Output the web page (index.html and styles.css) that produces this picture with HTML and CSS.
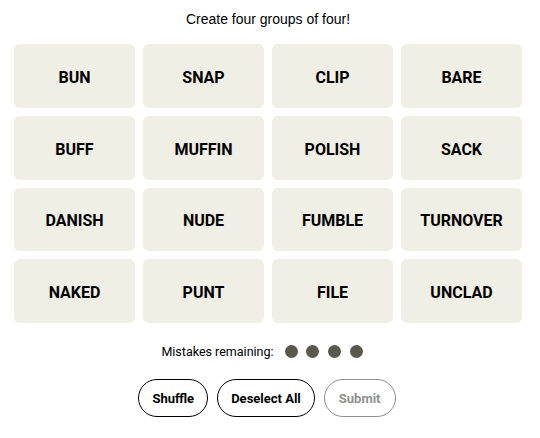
FILE: index.html
```html
<!DOCTYPE html>
<html>
<head>
<meta charset="utf-8">
<link rel="stylesheet" href="styles.css">
</head>
<body>
<main class="game">
  <p class="title">Create four groups of four!</p>
  <div class="grid">
    <div class="tile">BUN</div>
    <div class="tile">SNAP</div>
    <div class="tile">CLIP</div>
    <div class="tile">BARE</div>
    <div class="tile">BUFF</div>
    <div class="tile">MUFFIN</div>
    <div class="tile">POLISH</div>
    <div class="tile">SACK</div>
    <div class="tile">DANISH</div>
    <div class="tile">NUDE</div>
    <div class="tile">FUMBLE</div>
    <div class="tile">TURNOVER</div>
    <div class="tile">NAKED</div>
    <div class="tile">PUNT</div>
    <div class="tile">FILE</div>
    <div class="tile">UNCLAD</div>
  </div>
  <div class="mistakes">
    <span class="mistakes-label">Mistakes remaining:</span>
    <span class="dots"><span class="dot"></span><span class="dot"></span><span class="dot"></span><span class="dot"></span></span>
  </div>
  <div class="actions">
    <button class="btn">Shuffle</button>
    <button class="btn">Deselect All</button>
    <button class="btn btn-disabled">Submit</button>
  </div>
</main>
</body>
</html>
```
FILE: styles.css
```css
html, body {
  margin: 0;
  padding: 0;
  background: #ffffff;
}
body {
  font-family: "Liberation Sans", Arial, sans-serif;
  color: #000;
}
.game {
  padding: 0 18px 0 14px;
  width: 540px;
  box-sizing: border-box;
}
.title {
  margin: 0;
  height: 44px;
  padding-top: 10px;
  box-sizing: border-box;
  text-align: center;
  font-size: 14px;
  line-height: 18px;
}
.grid {
  display: grid;
  grid-template-columns: repeat(4, 1fr);
  grid-template-rows: repeat(4, 1fr);
  gap: 8px;
  height: 279px;
}
.tile {
  background: #efefe6;
  border-radius: 6px;
  display: flex;
  align-items: center;
  justify-content: center;
  font-family: Roboto, "Liberation Sans", sans-serif;
  font-weight: 700;
  font-size: 16px;
  padding-top: 3px;
}
.mistakes {
  display: flex;
  justify-content: center;
  align-items: center;
  gap: 11px;
  height: 56px;
  font-family: Roboto, "Liberation Sans", sans-serif;
  font-size: 12.5px;
  padding-left: 2px;
  padding-right: 14px;
}
.dots {
  display: flex;
  gap: 8.7px;
}
.dot {
  width: 13px;
  height: 13px;
  border-radius: 50%;
  background: #5a594e;
}
.actions {
  display: flex;
  justify-content: center;
  gap: 9px;
  padding-right: 2px;
}
.btn {
  font-family: Roboto, "Liberation Sans", sans-serif;
  font-size: 13px;
  font-weight: 700;
  color: #000;
  background: #fff;
  border: 1px solid #000;
  border-radius: 999px;
  height: 38px;
  padding: 0 13px;
}
.btn-disabled {
  color: #8f8f8f;
  border-color: #8f8f8f;
  padding: 0 14px;
}
```
